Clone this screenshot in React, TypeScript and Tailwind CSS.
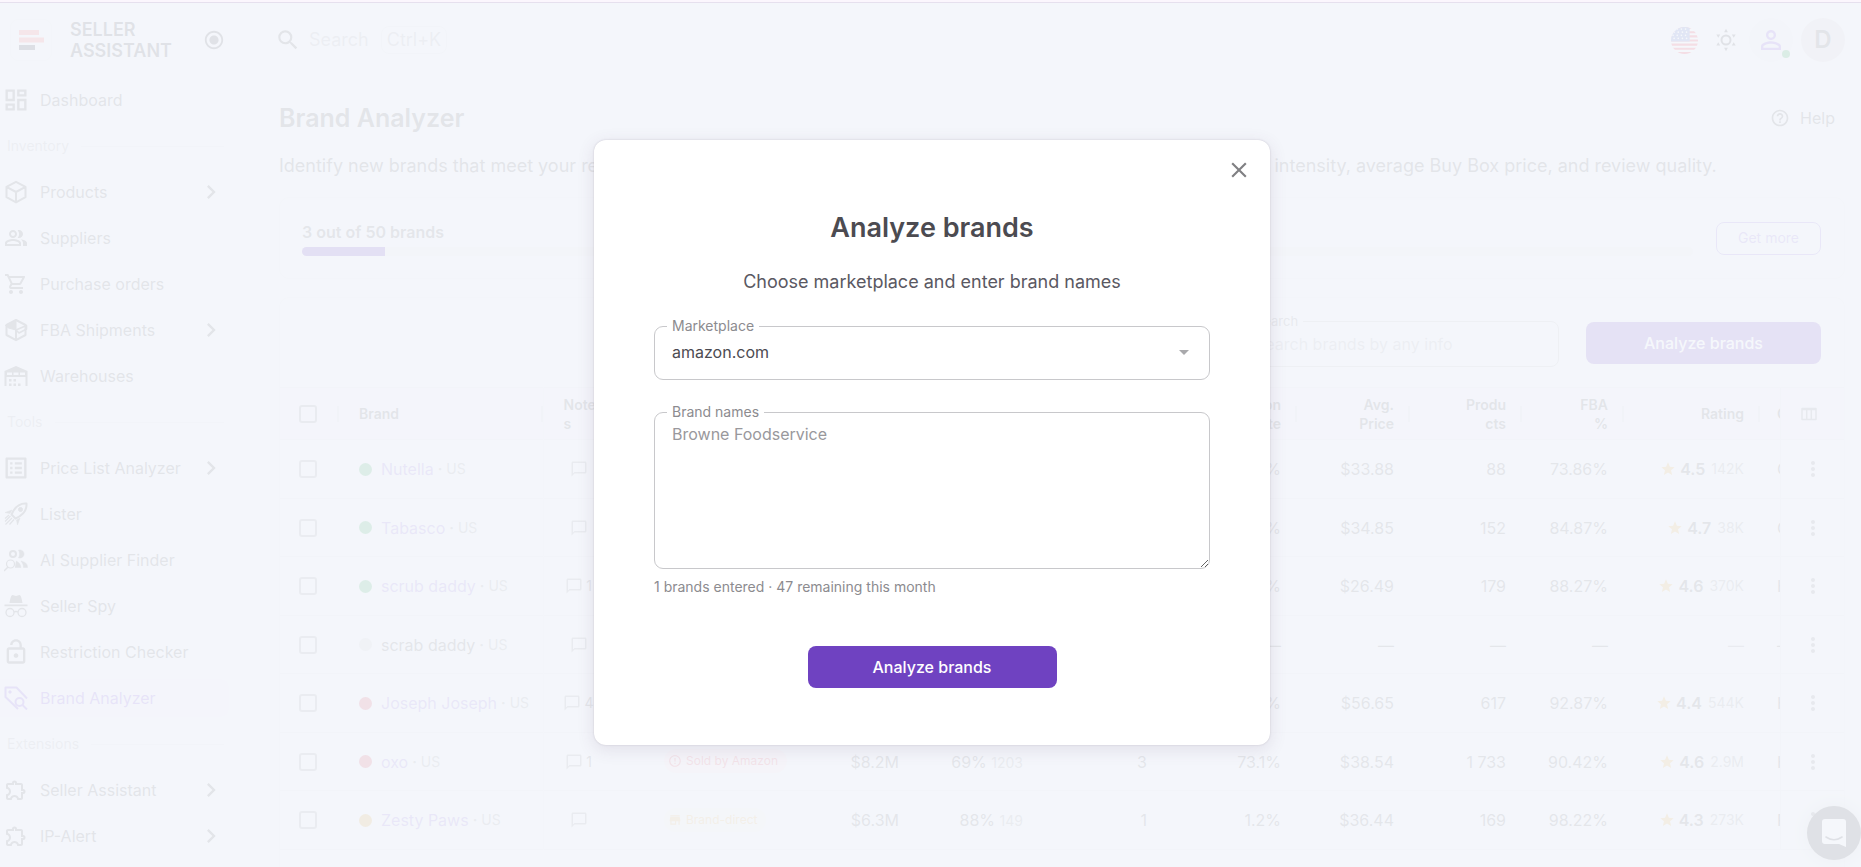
import type { ReactNode } from 'react';
import {
  MdArrowDropDown,
  MdChatBubbleOutline,
  MdChevronRight,
  MdClose,
  MdErrorOutline,
  MdHelpOutline,
  MdMoreVert,
  MdOutlineDashboard,
  MdOutlineExtension,
  MdOutlineListAlt,
  MdOutlineLockOpen,
  MdOutlinePeopleAlt,
  MdOutlineShoppingCart,
  MdPersonOutline,
  MdRadioButtonChecked,
  MdSearch,
  MdStar,
  MdStore,
} from 'react-icons/md';

type NavEntry = { label: string; icon?: ReactNode; more?: boolean; active?: boolean };

const line = { fill: 'none', stroke: 'currentColor', strokeWidth: 2, strokeLinejoin: 'round' as const };

function CubeIcon() {
  return (
    <svg viewBox="0 0 24 24" className="size-6" {...line}>
      <path d="M12 1.8 21.5 6.8V17.2L12 22.4 2.5 17.2V6.8ZM2.5 6.8 12 12l9.500-5.200M12 12v10.400" />
    </svg>
  );
}

function OpenBoxIcon() {
  return (
    <svg viewBox="0 0 24 24" className="size-6" {...line}>
      <path d="M12 2 21.500 7V17L12 22.200 2.500 17V7ZM12 12v10" />
      <path d="M12 2 1.500 7.500 4.500 10 12 12Z" fill="currentColor" strokeWidth={1} />
      <path d="M12 12 22.500 7.500V11L15 15l-3-3" strokeWidth={1.600} />
    </svg>
  );
}

function WarehouseIcon() {
  return (
    <svg viewBox="0 0 24 24" className="size-6" fill="currentColor">
      <path d="M12 2 0.500 7v15h2V13h19v9h2V7ZM3 8.500h5V11H3Zm6.500 0h5V11h-5Zm6.500 0h5V11h-5Z" fillRule="evenodd" />
      <path d="M5 15h2.500v2.500H5Zm4.500 0H12v2.500H9.500ZM5 19.500h2.500V22H5Zm4.500 0H12V22H9.500Zm4.500 0h2.500V22H14Z" />
    </svg>
  );
}

function RocketIcon() {
  return (
    <svg viewBox="0 0 24 24" className="size-6" {...line}>
      <path d="M22.500 1.500C16.500 1 11 4.500 7.500 12.500l4 4C19.500 13 23 7.500 22.500 1.500Z" />
      <circle cx="16.500" cy="7.500" r="2" fill="currentColor" strokeWidth={1} />
      <path d="M8 8 1 10.500l5 1ZM16 16l-2.500 7-1-5Z" fill="currentColor" strokeWidth={0.500} />
      <path d="m6.500 14-5.500 5.500M8 16l-6.500 6.500M10 17.500 5.500 22.500M5 13l-4 3.500" strokeWidth={1.200} />
    </svg>
  );
}

function SupplierFinderIcon() {
  return (
    <svg viewBox="0 0 24 24" className="size-6" {...line}>
      <circle cx="9" cy="6" r="3" />
      <path d="M14.500 2c4-.5 5.500 2 5.500 4s-1.500 4.500-5.500 4c1.500-2.500 1.500-5.500 0-8ZM17 13c4 1 6.500 2.500 6.500 6.500h-4c0-3-1-4.500-2.500-6.500ZM12 13c2.500 1 4.500 3 5 6.500h-6" fill="currentColor" strokeWidth={0.500} />
      <circle cx="6.500" cy="16" r="4" strokeWidth={1.200} />
      <path d="M4 19 0 23" strokeWidth={1.400} />
    </svg>
  );
}

function SpyIcon() {
  return (
    <svg viewBox="0 0 24 24" className="size-6">
      <path d="M8.500 1 12 2l3.500-1c1.500 0 2.300 4 3 8h-13c.7-4 1.500-8 3-8ZM0.500 10.500h23v1.800h-23Z" fill="currentColor" />
      <circle cx="6" cy="18.500" r="4" {...line} strokeWidth={1.300} />
      <circle cx="18" cy="18.500" r="4" {...line} strokeWidth={1.300} />
      <path d="M10 18q2-1 4 0" {...line} strokeWidth={1.300} />
    </svg>
  );
}

function TagSearchIcon() {
  return (
    <svg viewBox="0 0 24 24" className="size-6" {...line}>
      <path d="M23 12.500 12.500 1.500H1.500V11L14 23" />
      <circle cx="6" cy="6" r="1.200" fill="currentColor" strokeWidth={1} />
      <circle cx="15.500" cy="16" r="4" />
      <path d="m18.500 19 4.500 4.500" />
    </svg>
  );
}

function SunIcon() {
  return (
    <svg viewBox="0 0 24 24" className="size-6 text-[#55555a]">
      <circle cx="12" cy="12" r="4.500" {...line} />
      {[0, 60, 120, 180, 240, 300].map((angle) => (
        <path key={angle} d="M12 0.800 13.900 4.200H10.100Z" fill="currentColor" transform={`rotate(${angle} 12 12)`} />
      ))}
    </svg>
  );
}

function FlagIcon() {
  return (
    <svg viewBox="0 0 26 26" className="size-[27px]" aria-label="United States">
      <clipPath id="flag-circle">
        <circle cx="13" cy="13" r="13" />
      </clipPath>
      <g clipPath="url(#flag-circle)">
        <path d="M0 0h26v26H0Z" fill="#fff" />
        {[0, 4, 8, 12, 16, 20, 24].map((y) => (
          <path key={y} d={`M0 ${y}h26v2H0Z`} fill="#f0324a" />
        ))}
        <path d="M0 0h18v14H0Z" fill="#5a76c8" />
        {[2, 5, 8, 11].map((y) =>
          [2, 6, 10, 14].map((x) => <circle key={`${x}-${y}`} cx={x + (y % 2)} cy={y} r="0.800" fill="#fff" />),
        )}
      </g>
    </svg>
  );
}

function ColumnsIcon() {
  return (
    <svg viewBox="0 0 16 14" className="h-[14px] w-4 text-[#8c8c92]" {...line} strokeWidth={1.500}>
      <path d="M1 1.500h14v11H1ZM1 2.500h14M5.700 2v11M10.300 2v11" />
    </svg>
  );
}

const nav: NavEntry[] = [
  { label: 'Dashboard', icon: <MdOutlineDashboard className="size-7" /> },
  { label: 'Inventory' },
  { label: 'Products', icon: <CubeIcon />, more: true },
  { label: 'Suppliers', icon: <MdOutlinePeopleAlt className="size-6" /> },
  { label: 'Purchase orders', icon: <MdOutlineShoppingCart className="size-6" /> },
  { label: 'FBA Shipments', icon: <OpenBoxIcon />, more: true },
  { label: 'Warehouses', icon: <WarehouseIcon /> },
  { label: 'Tools' },
  { label: 'Price List Analyzer', icon: <MdOutlineListAlt className="size-7" />, more: true },
  { label: 'Lister', icon: <RocketIcon /> },
  { label: 'AI Supplier Finder', icon: <SupplierFinderIcon /> },
  { label: 'Seller Spy', icon: <SpyIcon /> },
  { label: 'Restriction Checker', icon: <MdOutlineLockOpen className="size-7" /> },
  { label: 'Brand Analyzer', icon: <TagSearchIcon />, active: true },
  { label: 'Extensions' },
  { label: 'Seller Assistant', icon: <MdOutlineExtension className="size-6" />, more: true },
  { label: 'IP-Alert', icon: <MdOutlineExtension className="size-6" />, more: true },
];

type Row = {
  name: string;
  dot: string;
  notes?: string;
  chip?: 'amazon' | 'direct';
  revenue: string;
  share: string;
  shareCount: string;
  sellers: string;
  rate: string;
  price: string;
  products: string;
  fba: string;
  rating?: string;
  reviews?: string;
  category: string;
};

const rows: Row[] = [
  { name: 'Nutella', dot: 'bg-[#3faf63]', revenue: '$9.8M', share: '81%', shareCount: '310', sellers: '4', rate: '42.3%', price: '$33.88', products: '88', fba: '73.86%', rating: '4.5', reviews: '142K', category: 'Grocery' },
  { name: 'Tabasco', dot: 'bg-[#3faf63]', revenue: '$1.4M', share: '77%', shareCount: '204', sellers: '3', rate: '38.6%', price: '$34.85', products: '152', fba: '84.87%', rating: '4.7', reviews: '38K', category: 'Grocery' },
  { name: 'scrub daddy', dot: 'bg-[#3faf63]', notes: '1', revenue: '$7.1M', share: '72%', shareCount: '415', sellers: '3', rate: '51.2%', price: '$26.49', products: '179', fba: '88.27%', rating: '4.6', reviews: '370K', category: 'Health' },
  { name: 'scrab daddy', dot: 'bg-[#d0d0d5]', revenue: '—', share: '—', shareCount: '', sellers: '—', rate: '—', price: '—', products: '—', fba: '—', category: '—' },
  { name: 'Joseph Joseph', dot: 'bg-[#d9485f]', notes: '4', revenue: '$8.9M', share: '66%', shareCount: '980', sellers: '3', rate: '64.8%', price: '$56.65', products: '617', fba: '92.87%', rating: '4.4', reviews: '544K', category: 'Home' },
  { name: 'oxo', dot: 'bg-[#d9485f]', notes: '1', chip: 'amazon', revenue: '$8.2M', share: '69%', shareCount: '1203', sellers: '3', rate: '73.1%', price: '$38.54', products: '1 733', fba: '90.42%', rating: '4.6', reviews: '2.9M', category: 'Home' },
  { name: 'Zesty Paws', dot: 'bg-[#dba63f]', chip: 'direct', revenue: '$6.3M', share: '88%', shareCount: '149', sellers: '1', rate: '1.2%', price: '$36.44', products: '169', fba: '98.22%', rating: '4.3', reviews: '273K', category: 'Pets' },
];

function Sidebar() {
  return (
    <aside className="w-[229px] shrink-0">
      <div className="flex h-[74px] items-center pl-[10px]">
        <span className="flex size-[42px] items-center rounded-lg border border-[#ececf1] pl-2">
          <svg viewBox="0 0 25 20" className="h-5 w-[25px]">
            <path d="M0 0h20v5H0ZM0 7.500h25v5H0Z" fill="#ff7070" />
            <path d="M0 15h16v5H0Z" fill="#3a3f4c" />
          </svg>
        </span>
        <span className="ml-[18px] w-[133px] text-lg leading-[21px] font-semibold text-[#55555a]">SELLER ASSISTANT</span>
        <button type="button" aria-label="Collapse menu">
          <MdRadioButtonChecked className="size-[22px] text-[#55555a]" />
        </button>
      </div>
      <nav>
        {nav.map((entry) =>
          entry.icon ? (
            <div key={entry.label} className="flex h-[46px] items-center">
              <a
                href="#"
                className={
                  entry.active
                    ? 'flex h-[38px] w-full items-center rounded-r-lg bg-[#f0eefb] pr-2 text-[#8a5fe0]'
                    : 'flex h-[38px] w-full items-center pr-2 text-[#68686d]'
                }
              >
                <span className="flex w-[31px] shrink-0 items-center justify-center">{entry.icon}</span>
                <span className="ml-[9px] flex-1 text-base">{entry.label}</span>
                {entry.more && <MdChevronRight className="-mr-1 size-7 shrink-0" />}
              </a>
            </div>
          ) : (
            <div key={entry.label} className="flex h-[46px] items-center gap-3 pr-[5px] pl-[7px] text-sm text-[#b4b4ba]">
              {entry.label}
              <span className="h-px flex-1 bg-[#e6e6ec]" />
            </div>
          ),
        )}
      </nav>
    </aside>
  );
}

function TopBar() {
  return (
    <header className="flex h-[74px] items-center justify-between pr-4">
      <div className="flex items-center">
        <MdSearch className="-ml-1 size-[26px] text-[#68686d]" />
        <span className="ml-2 text-lg text-[#b4b4ba]">Search</span>
        <kbd className="ml-3 rounded-lg border border-[#e6e6ec] px-[5px] font-[Inter] text-lg leading-[26px] text-[#b4b4ba]">Ctrl+K</kbd>
      </div>
      <div className="flex items-center gap-2">
        <button type="button" className="mr-2" aria-label="Marketplace country">
          <FlagIcon />
        </button>
        <button type="button" className="mr-[3px]" aria-label="Theme">
          <SunIcon />
        </button>
        <button type="button" aria-label="Profile" className="relative flex size-11 items-center justify-center rounded-full bg-[#edebf6]">
          <MdPersonOutline className="size-[30px] text-[#8a5fe0]" />
          <span className="absolute right-[3px] bottom-1 size-2 rounded-full bg-[#2fa855]" />
        </button>
        <button type="button" className="size-11 rounded-full bg-[#dcd5dd] text-2xl font-semibold text-[#68686d]">D</button>
      </div>
    </header>
  );
}

const headCell = 'relative pr-4 pl-4 text-right text-sm leading-[19px] font-semibold';
const bodyCell = 'pr-4 text-right';

function Tick() {
  return <span className="absolute top-[18px] right-0 h-4 w-[2px] bg-[#dedee4]" />;
}

function BrandTable() {
  return (
    <table className="w-full table-fixed border-collapse text-base text-[#707075]">
      <colgroup>
        <col className="w-[59px]" />
        <col className="w-[204px]" />
        <col className="w-[101px]" />
        <col />
        <col className="w-[120px]" />
        <col className="w-[124px]" />
        <col className="w-[124px]" />
        <col className="w-[134px]" />
        <col className="w-[113px]" />
        <col className="w-[112px]" />
        <col className="w-[102px]" />
        <col className="w-[136px]" />
        <col className="w-5" />
        <col className="w-16" />
      </colgroup>
      <thead>
        <tr className="h-[52px] border-y border-[#e6e6ec] bg-[#f0effa] text-[#68686d]">
          <th className="relative pl-[19px] text-left">
            <input type="checkbox" aria-label="Select all" className="block size-[18px] appearance-none rounded-[3px] border-2 border-[#9c9ca2]" />
            <Tick />
          </th>
          <th className="relative border-r border-[#ececf2] pl-5 text-left text-sm font-semibold">
            Brand
            <Tick />
          </th>
          <th className="pl-5 text-left text-sm leading-[19px] font-semibold">Note<br />s</th>
          <th className="pl-5 text-left text-sm font-semibold">Status</th>
          <th className={headCell}>Revenue</th>
          <th className={headCell}>Share</th>
          <th className={headCell}>Sellers</th>
          <th className={headCell}>Amazon<br />Rate<Tick /></th>
          <th className={headCell}>Avg.<br />Price<Tick /></th>
          <th className={headCell}>Produ<br />cts<Tick /></th>
          <th className={headCell}>FBA<br />%<Tick /></th>
          <th className={headCell}>Rating<Tick /></th>
          <th className="overflow-hidden pl-[17px] text-left text-sm font-semibold whitespace-nowrap">Category</th>
          <th className="border-l border-[#e6e6ec] pl-5">
            <button type="button" className="block" aria-label="Columns"><ColumnsIcon /></button>
          </th>
        </tr>
      </thead>
      <tbody>
        {rows.map((row) => (
          <tr key={row.name} className="border-b border-[#e6e6ec] odd:h-[59px] even:h-[58px]">
            <td className="pl-[19px]">
              <input type="checkbox" aria-label={`Select ${row.name}`} className="block size-[18px] appearance-none rounded-[3px] border-2 border-[#a5a5ab]" />
            </td>
            <td className="border-r border-[#ececf2] pl-5">
              <div className="flex items-center whitespace-nowrap">
                <span className={`mr-[9px] size-[13px] rounded-full ${row.dot}`} />
                {row.rating ? <a href="#" className="text-[#9a7fe0]">{row.name}</a> : <span>{row.name}</span>}
                <span className="ml-1 text-sm text-[#a0a0a6]">
                  <b>·</b> US
                </span>
              </div>
            </td>
            <td>
              <div className="flex w-[70px] items-center justify-center gap-[3px] text-sm">
                <MdChatBubbleOutline className="size-[18px] text-[#9c9ca2]" />
                {row.notes}
              </div>
            </td>
            <td className="pl-5">
              {row.chip === 'amazon' && (
                <span className="inline-flex h-6 items-center gap-1 rounded-full bg-[#f8e6ea] pr-[9px] pl-1 text-xs whitespace-nowrap text-[#e8566a]">
                  <MdErrorOutline className="size-[14px]" />
                  Sold by Amazon
                </span>
              )}
              {row.chip === 'direct' && (
                <span className="inline-flex h-6 items-center gap-1 rounded-full bg-[#f4f3ea] pr-[9px] pl-1 text-xs whitespace-nowrap text-[#e8b860]">
                  <MdStore className="size-[14px]" />
                  Brand-direct
                </span>
              )}
            </td>
            <td className={bodyCell}>{row.revenue}</td>
            <td className={bodyCell}>{row.share} <span className="text-sm text-[#a0a0a6]">{row.shareCount}</span></td>
            <td className={bodyCell}>{row.sellers}</td>
            <td className={bodyCell}>{row.rate}</td>
            <td className={bodyCell}>{row.price}</td>
            <td className={bodyCell}>{row.products}</td>
            <td className={bodyCell}>{row.fba}</td>
            <td className={bodyCell}>
              {row.rating ? (
                <div className="flex items-center justify-end">
                  <MdStar className="mr-1 size-4 text-[#e8b04a]" />
                  <span className="mr-[6px] font-semibold">{row.rating}</span>
                  <span className="text-sm text-[#a0a0a6]">{row.reviews}</span>
                </div>
              ) : (
                <span className="text-[#9c9ca2]">—</span>
              )}
            </td>
            <td className="overflow-hidden pl-[17px] whitespace-nowrap">{row.category}</td>
            <td className="border-l border-[#e6e6ec] pl-5">
              <button type="button" className="block" aria-label="Row actions"><MdMoreVert className="size-6 text-[#8c8c92]" /></button>
            </td>
          </tr>
        ))}
      </tbody>
    </table>
  );
}

function MainContent() {
  return (
    <main className="pr-4">
      <div className="flex items-center justify-between pt-[23px] pr-[10px]">
        <h1 className="text-[25px] leading-9 font-semibold text-[#68686d]">Brand Analyzer</h1>
        <a href="#" className="flex items-center gap-[10px] text-base text-[#68686d]">
          <MdHelpOutline className="size-5" />
          Help
        </a>
      </div>
      <p className="mt-4 text-lg whitespace-nowrap text-[#68686d]">
        Identify new brands that meet your requirements. Compare their revenues, Amazon shares, seller count, competition intensity, average Buy Box price, and review quality.
      </p>
      <section className="mt-[17px] flex h-[82px] items-center gap-[23px] rounded-[10px] border border-[#ececf2] bg-[#f4f6fa] pr-[23px] pl-[22px]">
        <div className="flex-1">
          <p className="text-base font-semibold text-[#707075]">3 out of 50 brands</p>
          <div className="mt-[3px] h-[9px] overflow-hidden rounded-full bg-[#e8e8ee]">
            <div className="h-full w-[6%] bg-[#6f42c1]" />
          </div>
        </div>
        <button type="button" className="h-[33px] w-[105px] rounded-lg border border-[#9a7fe0] text-sm text-[#9a7fe0]">Get more</button>
      </section>
      <section className="mt-[18px] rounded-t-[10px] border border-b-0 border-[#ececf2] bg-[#f4f6fa] pb-10">
        <div className="flex items-start justify-end gap-[27px] px-[23px] pt-[13px] pb-5">
          <fieldset className="h-[56px] w-[320px] rounded-lg border border-[#c0c0c6] px-[10px]">
            <legend className="px-[5px] text-[13px] leading-5 text-[#8c8c92]">
              <label htmlFor="search">Search</label>
            </legend>
            <input id="search" type="text" placeholder="Search brands by any info" className="block h-[26px] w-full px-[5px] text-base outline-none placeholder:text-[#b4b4ba]" />
          </fieldset>
          <button type="button" className="mt-[11px] h-[42px] w-[235px] rounded-lg bg-[#7c52c8] text-base font-medium text-white">Analyze brands</button>
        </div>
        <BrandTable />
      </section>
    </main>
  );
}

function AnalyzeDialog() {
  return (
    <div
      role="dialog"
      aria-modal="true"
      aria-labelledby="dialog-title"
      className="relative w-full max-w-[676px] rounded-xl bg-white px-[60px] pt-[67px] pb-[57px] shadow-[0_4px_16px_2px_rgba(90,60,100,0.10),0_0_2px_rgba(60,50,70,0.2)]"
    >
      <button type="button" aria-label="Close" className="absolute top-[17px] right-[18px] text-[#808083]">
        <MdClose className="size-[26px]" />
      </button>
      <h2 id="dialog-title" className="text-center text-[27px] leading-[42px] font-semibold text-[#4c4b51]">Analyze brands</h2>
      <p className="mt-[19px] text-center text-lg leading-7 text-[#5a5862]">Choose marketplace and enter brand names</p>
      <fieldset className="relative mt-[20px] h-[64px] rounded-[9px] border border-[#c8c8cb] px-3">
        <legend className="px-[5px] text-sm leading-5 text-[#8c8b8f]">
          <label htmlFor="marketplace">Marketplace</label>
        </legend>
        <select id="marketplace" className="block h-8 w-full appearance-none bg-transparent px-[5px] text-base text-[#4c4b51] outline-none">
          <option>amazon.com</option>
        </select>
        <MdArrowDropDown className="pointer-events-none absolute right-[13px] bottom-[15px] size-6 text-[#a9a9ac]" />
      </fieldset>
      <fieldset className="mt-[22px] rounded-[9px] border border-[#c8c8cb]">
        <legend className="ml-3 px-[5px] text-sm leading-5 text-[#8c8b8f]">
          <label htmlFor="brand-names">Brand names</label>
        </legend>
        <textarea
          id="brand-names"
          defaultValue="Browne Foodservice"
          spellCheck={false}
          className="block h-[146px] w-full resize-y rounded-b-[9px] px-[17px] text-base leading-6 text-[#99989c] outline-none"
        />
      </fieldset>
      <p className="mt-2 text-sm leading-5 text-[#8c8b8f]">1 brands entered · 47 remaining this month</p>
      <div className="mt-[49px] flex justify-center">
        <button type="button" className="h-[42px] w-[249px] rounded-lg bg-[#6f42c1] text-base font-medium text-white">Analyze brands</button>
      </div>
    </div>
  );
}

export default function App() {
  return (
    <div className="relative h-screen overflow-hidden bg-[#f4f6fa] font-['Inter','Liberation_Sans',sans-serif]">
      <div className="h-[3px] border-b border-[#e6e0ee] bg-[#fbf6fd]" />
      <div className="flex">
        <Sidebar />
        <div className="ml-[50px] min-w-0 flex-1">
          <TopBar />
          <MainContent />
        </div>
      </div>
      <button type="button" aria-label="Open chat" className="absolute right-0 bottom-[7px] flex size-[54px] items-center justify-center rounded-full bg-[#4a4a50] shadow-[0_0_18px_rgba(0,0,0,0.2)]">
        <svg viewBox="0 0 24 28" className="h-7 w-6">
          <path d="M3 0h18q3 0 3 3v25l-7-3H3q-3 0-3-3V3q0-3 3-3Z" fill="#fff" />
          <path d="M4 18q8 5.500 16 0" fill="none" stroke="#4a4a50" strokeWidth="1.600" strokeLinecap="round" />
        </svg>
      </button>
      <div className="absolute inset-x-0 top-[3px] bottom-0 bg-[#f4f6fa]/88" />
      <div className="absolute inset-0 flex items-start justify-center pt-[140px] pl-[3px]">
        <AnalyzeDialog />
      </div>
    </div>
  );
}
